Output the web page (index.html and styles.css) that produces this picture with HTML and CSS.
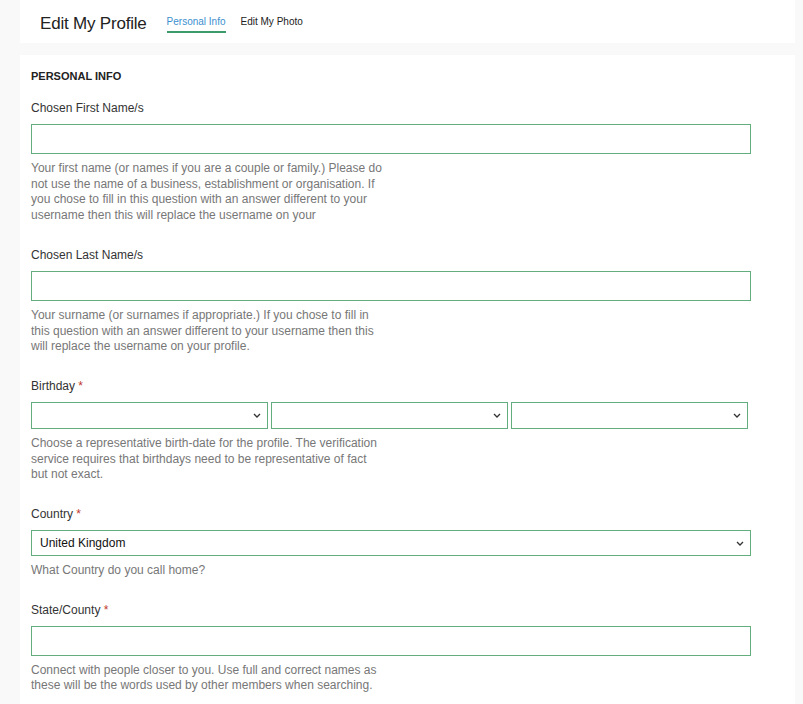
FILE: index.html
```html
<!DOCTYPE html>
<html lang="en">
<head>
    <meta charset="UTF-8">
    <meta name="viewport" content="width=device-width, initial-scale=1.0">
    <title>Edit My Profile</title>
    <link rel="stylesheet" href="styles.css">
</head>
<body>
    <div class="page-header">
        <h1>Edit My Profile</h1>
        <nav class="tabs">
            <a class="tab active" href="#">Personal Info</a>
            <a class="tab" href="#">Edit My Photo</a>
        </nav>
    </div>

    <form class="profile-form">
        <h2 class="section-title">PERSONAL INFO</h2>

        <div class="field">
            <label for="firstName">Chosen First Name/s</label>
            <input type="text" id="firstName" class="text-input">
            <p class="help">Your first name (or names if you are a couple or family.) Please do not use the name of a business, establishment or organisation. If you chose to fill in this question with an answer different to your username then this will replace the username on your</p>
        </div>

        <div class="field">
            <label for="lastName">Chosen Last Name/s</label>
            <input type="text" id="lastName" class="text-input">
            <p class="help">Your surname (or surnames if appropriate.) If you chose to fill in this question with an answer different to your username then this will replace the username on your profile.</p>
        </div>

        <div class="field">
            <label>Birthday <span class="req">*</span></label>
            <div class="date-row">
                <select class="select-input"><option></option></select>
                <select class="select-input"><option></option></select>
                <select class="select-input"><option></option></select>
            </div>
            <p class="help">Choose a representative birth-date for the profile. The verification service requires that birthdays need to be representative of fact but not exact.</p>
        </div>

        <div class="field">
            <label for="country">Country <span class="req">*</span></label>
            <select id="country" class="select-input country">
                <option>United Kingdom</option>
            </select>
            <p class="help">What Country do you call home?</p>
        </div>

        <div class="field">
            <label for="state">State/County <span class="req">*</span></label>
            <input type="text" id="state" class="text-input">
            <p class="help">Connect with people closer to you. Use full and correct names as these will be the words used by other members when searching.</p>
        </div>
    </form>
</body>
</html>
```

FILE: styles.css
```css
body {
    margin: 0;
    padding: 0 8px 0 20px;
    background-color: #f9f9f9; /* very light gray page */
    font-family: 'Liberation Sans', Arial, sans-serif;
    color: #333;
}

.page-header {
    display: flex;
    align-items: flex-end;
    height: 43px;
    padding-left: 20px;
    background-color: #fff;
    box-sizing: border-box;
}

.page-header h1 {
    margin: 0 20px 9px 0;
    font-size: 17px;
    letter-spacing: -0.2px;
    font-weight: normal;
    color: #222;
}

.tabs {
    display: flex;
    gap: 15px;
    margin-bottom: 10px;
}

.tab {
    font-size: 10px;
    color: #222;
    text-decoration: none;
    padding-bottom: 4px;
    border-bottom: 2px solid transparent;
}

.tab.active {
    color: #3b8fcf; /* blue */
    border-bottom-color: #3d9a6b; /* green underline */
}

.profile-form {
    margin-top: 12px;
    padding: 15px 44px 20px 11px;
    background-color: #fff;
}

.section-title {
    margin: 0 0 18px 0;
    font-size: 11px;
    font-weight: bold;
    color: #222;
}

.field {
    margin-bottom: 23px;
}

.field label {
    display: block;
    margin-bottom: 8px;
    font-size: 12px;
    line-height: 16px;
    color: #333;
}

.req {
    color: #c0392b;
}

.text-input {
    display: block;
    width: 100%;
    height: 30px;
    box-sizing: border-box;
    border: 1px solid #63ad7f; /* green border */
    border-radius: 0;
    font-family: inherit;
}

.date-row {
    display: flex;
    gap: 3px;
    width: 717px;
}

.select-input {
    flex: 1;
    height: 27px;
    padding: 0 20px 0 8px;
    border: 1px solid #63ad7f;
    border-radius: 0;
    appearance: none;
    background: #fff url("data:image/svg+xml,%3Csvg xmlns='http://www.w3.org/2000/svg' width='8' height='5' viewBox='0 0 8 5'%3E%3Cpath d='M1 1l3 3 3-3' fill='none' stroke='%23333' stroke-width='1.3'/%3E%3C/svg%3E") no-repeat right 6px center;
    font-family: inherit;
    font-size: 12px;
    color: #111;
}

.select-input.country {
    display: block;
    width: 100%;
    height: 26px;
}

.help {
    max-width: 354px;
    margin: 7px 0 0 0;
    font-size: 12px;
    line-height: 15.7px;
    color: #777;
}
```
